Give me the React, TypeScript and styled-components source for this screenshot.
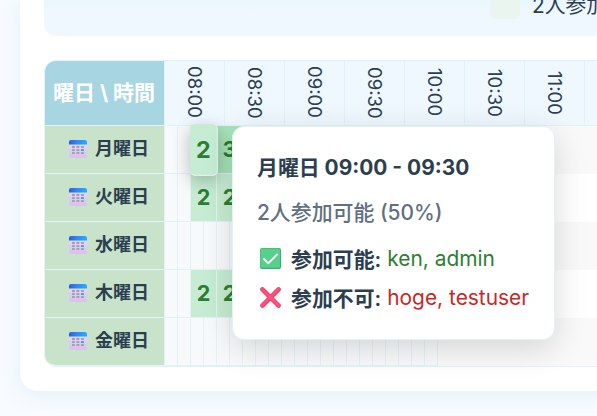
import React from "react";
import styled, { createGlobalStyle, css } from "styled-components";

const line = "#e3f2f7";

const Global = createGlobalStyle`
  * { box-sizing: border-box; }
  body {
    margin: 0;
    overflow: hidden;
    background: #f8fbff;
    color: #2c3e50;
    font-family: Inter, "Noto Sans CJK JP", sans-serif;
  }
`;

const Page = styled.div`
  width: 597px;
  height: 416px;
  overflow: hidden;
  padding-left: 20px;
`;

const Card = styled.main`
  width: 700px;
  height: 391px;
  padding-left: 24px;
  background: #fff;
  border-radius: 0 0 0 18px;
  box-shadow: 0 4px 20px rgba(168, 216, 234, 0.25);
`;

const Legend = styled.div`
  display: flex;
  height: 36px;
  padding-left: 446px;
  background: linear-gradient(#e9f7fc, #f0f8ff 14px);
  border-radius: 0 0 0 12px;
  overflow: hidden;
`;

const Swatch = styled.span`
  width: 30px;
  height: 19px;
  margin-right: 12px;
  background: #ebf5ef;
  border-radius: 0 0 6px 6px;
`;

const LegendText = styled.span`
  margin-top: -10px;
  font-size: 20.8px;
  line-height: 32px;
  white-space: nowrap;
`;

const Table = styled.section`
  position: relative;
  width: 680px;
  height: 307px;
  margin-top: 24px;
  border: 1px solid ${line};
  border-radius: 12px 0 0 12px;
`;

const Row = styled.div<{ $odd?: boolean }>`
  display: flex;
  height: 48px;
  background: ${(p) => (p.$odd ? "#f9f9f9" : "#fff")};
  border-radius: 0 0 0 11px;
`;

const HeadRow = styled(Row)`
  height: 65px;
  background: #f0f8ff;
  border-radius: 12px 0 0 0;
`;

const Corner = styled.div`
  width: 120px;
  flex: none;
  display: flex;
  align-items: center;
  justify-content: center;
  padding: 0 1px 5px 0;
  background: #a8d5e2;
  color: #fff;
  font-size: 21px;
  font-weight: 700;
  white-space: nowrap;
  border: solid ${line};
  border-width: 0 1px 1px 0;
  border-top-left-radius: 11px;
`;

const Time = styled.div`
  width: 60px;
  flex: none;
  display: flex;
  align-items: center;
  justify-content: center;
  padding-bottom: 1px;
  writing-mode: vertical-rl;
  font-size: 18.6px;
  border: solid ${line};
  border-width: 0 1px 1px 0;
`;

const Day = styled.div<{ $last: boolean }>`
  width: 120px;
  flex: none;
  display: flex;
  align-items: center;
  gap: 8px;
  padding: 0 0 1px 24px;
  background: #c8e3ca;
  border: solid ${line};
  border-width: 0 1px 1px 0;
  border-bottom-left-radius: ${(p) => (p.$last ? "11px" : "0")};
  font-size: 18px;
  font-weight: 600;
  white-space: nowrap;
`;

const DayName = styled.span`
  margin-top: -5px;
`;

const Slot = styled.div<{ $span: number; $tone?: string; $hover?: boolean }>`
  width: ${(p) => p.$span * 13}px;
  flex: none;
  display: flex;
  align-items: center;
  justify-content: center;
  padding-bottom: 2px;
  background: ${(p) => p.$tone ?? "#f8f9fb"};
  border: solid ${line};
  border-width: 0 1px 1px 0;
  color: #2e7d32;
  font-size: 21.6px;
  font-weight: 700;
  ${(p) =>
    p.$hover &&
    css`
      position: relative;
      z-index: 1;
      transform: scale(1.08);
      border-radius: 5px;
      box-shadow: 0 4px 16px rgba(0, 0, 0, 0.25);
    `}
`;

const Tooltip = styled.aside`
  position: absolute;
  z-index: 2;
  left: 187px;
  top: 65px;
  width: 323px;
  height: 214px;
  padding: 24px;
  background: #fff;
  border: 1px solid ${line};
  border-radius: 12px;
  box-shadow: 0 8px 32px rgba(0, 0, 0, 0.15);
  white-space: nowrap;
`;

const Title = styled.div`
  height: 32px;
  padding-top: 1px;
  line-height: 32px;
  font-size: 20.9px;
  font-weight: 700;
`;

const Summary = styled.div`
  height: 32px;
  margin-top: 14px;
  line-height: 32px;
  font-size: 20.9px;
  font-weight: 500;
  color: #607080;
`;

const Status = styled.div<{ $first?: boolean }>`
  display: flex;
  align-items: center;
  height: 32px;
  margin-top: ${(p) => (p.$first ? 13 : 7)}px;
  padding-left: 3px;
  font-size: 20.9px;
`;

const Label = styled.strong`
  margin: -1px 6px 0 10px;
  font-weight: 600;
`;

const Names = styled.span<{ $no?: boolean }>`
  color: ${(p) => (p.$no ? "#c62828" : "#2e7d32")};
`;

const Calendar = () => (
  <svg width="18" height="18" viewBox="0 0 18 18">
    <defs>
      <linearGradient id="calTop">
        <stop stopColor="#315bd4" />
        <stop offset=".45" stopColor="#2a8cfa" />
        <stop offset="1" stopColor="#2caaff" />
      </linearGradient>
      <linearGradient id="calPage" x2="0" y2="1">
        <stop stopColor="#e5dcf4" />
        <stop offset="1" stopColor="#d5c2e6" />
      </linearGradient>
    </defs>
    <rect y="1" width="18" height="17" rx="3" fill="url(#calPage)" />
    <path d="M0 4.500V2Q0 0 2 0h14Q18 0 18 2v2.500Z" fill="url(#calTop)" />
    {[6, 9, 12].map((y) =>
      [3, 7.5, 12].map((x) => (
        <rect
          key={`${x}-${y}`}
          x={x}
          y={y}
          width="2.8"
          height="2.1"
          rx=".4"
          fill={x === 12 && y === 9 ? "#3699f5" : "#a69ab5"}
        />
      )),
    )}
  </svg>
);

const Check = () => (
  <svg width="21" height="21" viewBox="0 0 21 21">
    <rect width="21" height="21" rx="2" fill="#3dae70" />
    <rect x=".5" y=".5" width="19.500" height="19.300" rx="1.500" fill="#55d18b" />
    <path
      d="m4 11 4.300 4.300L17 6.500"
      fill="none"
      stroke="#fff"
      strokeWidth="1.900"
      strokeLinecap="round"
      strokeLinejoin="round"
    />
  </svg>
);

const Cross = () => (
  <svg width="21" height="21" viewBox="0 0 21 21">
    <path
      d="m2.400 2.400 16.200 16.200M18.600 2.400 2.400 18.600"
      stroke="#df3a64"
      strokeWidth="4.400"
      strokeLinecap="round"
    />
    <path d="m2 2 16.400 16.400M18.400 2 2 18.400" stroke="#ff4f7d" strokeWidth="3" strokeLinecap="round" />
  </svg>
);

type SlotData = { span: number; value?: number; tone?: string; hover?: boolean };

const low = "#c6edd3";
const high = "#a8e6bc";

const blanks = (n: number): SlotData[] => Array.from({ length: n }, () => ({ span: 1 }));
const filled = (second: number, tone: string, hover = false): SlotData[] => [
  ...blanks(2),
  { span: 2, value: 2, tone: low, hover },
  { span: 2, value: second, tone },
  ...blanks(15),
];

const days: { name: string; slots: SlotData[] }[] = [
  { name: "月曜日", slots: filled(3, high, true) },
  { name: "火曜日", slots: filled(2, low) },
  { name: "水曜日", slots: blanks(21) },
  { name: "木曜日", slots: filled(2, low) },
  { name: "金曜日", slots: blanks(21) },
];

const times = ["08:00", "08:30", "09:00", "09:30", "10:00", "10:30", "11:00", ""];

export default function App() {
  return (
    <>
      <Global />
      <Page>
        <Card>
          <Legend>
            <Swatch />
            <LegendText>2人参加可能</LegendText>
          </Legend>
          <Table>
            <HeadRow>
              <Corner>曜日 \ 時間</Corner>
              {times.map((t) => (
                <Time key={t}>{t}</Time>
              ))}
            </HeadRow>
            {days.map((d, i) => (
              <Row key={d.name} $odd={i % 2 === 0}>
                <Day $last={i === days.length - 1}>
                  <Calendar />
                  <DayName>{d.name}</DayName>
                </Day>
                {d.slots.map((s, j) => (
                  <Slot key={j} $span={s.span} $tone={s.tone} $hover={s.hover}>
                    {s.value}
                  </Slot>
                ))}
              </Row>
            ))}
            <Tooltip>
              <Title>月曜日 09:00 - 09:30</Title>
              <Summary>2人参加可能 (50%)</Summary>
              <Status $first>
                <Check />
                <Label>参加可能:</Label>
                <Names>ken, admin</Names>
              </Status>
              <Status>
                <Cross />
                <Label>参加不可:</Label>
                <Names $no>hoge, testuser</Names>
              </Status>
            </Tooltip>
          </Table>
        </Card>
      </Page>
    </>
  );
}
